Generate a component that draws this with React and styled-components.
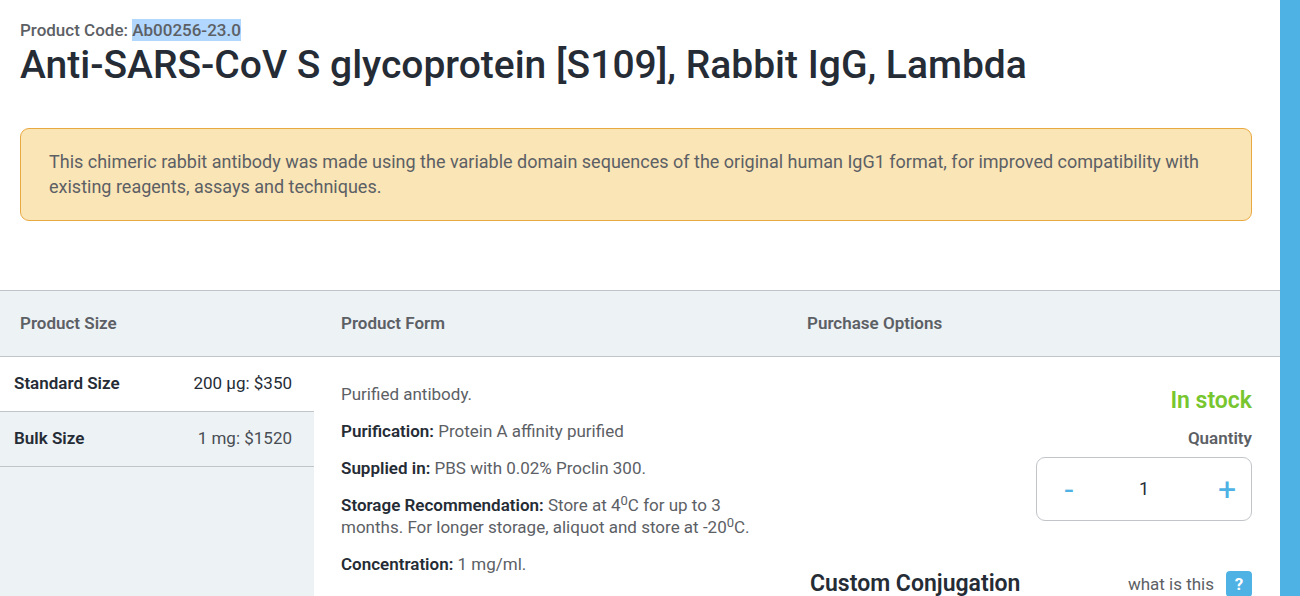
import React, { useState } from "react";
import styled, { createGlobalStyle, css } from "styled-components";

const color = {
  ink: "#252c35",
  text: "#5c6065",
  panel: "#edf2f5",
  line: "#c1c5c9",
  blue: "#4fb2e5",
  green: "#78c62f",
};

const GlobalStyle = createGlobalStyle`
  *, *::before, *::after { box-sizing: border-box; }
  body {
    margin: 0;
    background: #fff;
    color: ${color.text};
    font-family: Roboto, "Liberation Sans", sans-serif;
    font-size: 17px;
    line-height: 22px;
  }
  button, input { font: inherit; color: inherit; }
  h1, h2, p { margin: 0; }
`;

const Page = styled.main`
  display: flex;
  flex-direction: column;
  min-height: 100vh;
  border-right: 20px solid ${color.blue};
`;

const Intro = styled.header`
  padding: 19px 28px 69px 20px;
`;

const ProductCode = styled.p`
  font-weight: 500;

  mark {
    padding: 1px 0;
    background: #b2d7fe;
    color: inherit;
  }
`;

const Title = styled.h1`
  color: ${color.ink};
  font-size: 39px;
  font-weight: 500;
  line-height: 48px;
`;

const Notice = styled.p`
  margin-top: 39px;
  padding: 20px 28px 21px;
  border: 1px solid #e9a941;
  border-radius: 9px;
  background: #fae5b6;
  font-size: 18px;
  line-height: 25px;
`;

const columns = css`
  display: grid;
  grid-template-columns: 314fr 466fr 500fr;
`;

const ColumnHeader = styled.div`
  ${columns}
  border: solid ${color.line};
  border-width: 1px 0;
  background: ${color.panel};
`;

const ColumnTitle = styled.h2`
  padding: 21px 0 22px ${(p) => (p.$first ? "20px" : "27px")};
  font-size: 17px;
  font-weight: 600;
  line-height: 22px;
`;

const ColumnBody = styled.div`
  ${columns}
  flex: 1;
`;

const SizeList = styled.div`
  background: ${color.panel};
`;

const SizeOption = styled.button`
  display: flex;
  justify-content: space-between;
  width: 100%;
  padding: 15px 22px 17px 14px;
  border: 0;
  border-bottom: 1px solid ${color.line};
  background: ${(p) => (p.$selected ? "#fff" : "transparent")};
  color: ${(p) => (p.$selected ? color.ink : "#484d53")};
  cursor: pointer;
`;

const Strong = styled.strong`
  color: ${color.ink};
  font-weight: 600;
`;

const Details = styled.div`
  display: flex;
  flex-direction: column;
  gap: 15px;
  padding: 26px 26px 22px 27px;

  sup {
    font-size: 13px;
    line-height: 12px;
    vertical-align: 6px;
  }
`;

const Purchase = styled.div`
  display: flex;
  flex-direction: column;
  align-items: flex-end;
  padding: 30px 28px 0;
`;

const Stock = styled.p`
  color: ${color.green};
  font-size: 23px;
  font-weight: 600;
  line-height: 28px;
`;

const QuantityLabel = styled.label`
  margin: 12px 0 8px;
  font-weight: 600;
`;

const Stepper = styled.div`
  display: flex;
  align-items: center;
  justify-content: space-between;
  width: 216px;
  height: 64px;
  padding: 0 10px 0 18px;
  border: 1px solid ${color.line};
  border-radius: 9px;
`;

const StepButton = styled.button`
  width: 28px;
  height: 40px;
  padding: 0;
  border: 0;
  background: none;
  color: ${color.blue};
  font-size: 32px;
  line-height: 38px;
  cursor: pointer;
`;

const QuantityInput = styled.input`
  width: 80px;
  margin-right: 8px;
  padding: 0;
  border: 0;
  background: none;
  color: ${color.ink};
  font-size: 18px;
  text-align: center;
`;

const Conjugation = styled.div`
  display: flex;
  align-items: center;
  width: 100%;
  margin-top: 50px;
`;

const ConjugationTitle = styled.h2`
  flex: 1;
  padding-left: 2px;
  color: ${color.ink};
  font-size: 23px;
  font-weight: 600;
  line-height: 26px;
`;

const HelpButton = styled.button`
  width: 26px;
  height: 26px;
  margin-left: 12px;
  padding: 0;
  border: 0;
  border-radius: 4px;
  background: ${color.blue};
  color: #fff;
  font-weight: 700;
  cursor: pointer;
`;

const sizes = [
  { name: "Standard Size", price: "200 µg: $350" },
  { name: "Bulk Size", price: "1 mg: $1520" },
];

export default function App() {
  const [selected, setSelected] = useState(0);
  const [quantity, setQuantity] = useState(1);

  return (
    <>
      <GlobalStyle />
      <Page>
        <Intro>
          <ProductCode>
            Product Code: <mark>Ab00256-23.0</mark>
          </ProductCode>
          <Title>Anti-SARS-CoV S glycoprotein [S109], Rabbit IgG, Lambda</Title>
          <Notice>
            This chimeric rabbit antibody was made using the variable domain
            sequences of the original human IgG1 format, for improved
            compatibility with existing reagents, assays and techniques.
          </Notice>
        </Intro>
        <ColumnHeader>
          <ColumnTitle $first>Product Size</ColumnTitle>
          <ColumnTitle>Product Form</ColumnTitle>
          <ColumnTitle>Purchase Options</ColumnTitle>
        </ColumnHeader>
        <ColumnBody>
          <SizeList>
            {sizes.map((size, i) => (
              <SizeOption
                key={size.name}
                type="button"
                $selected={i === selected}
                aria-pressed={i === selected}
                onClick={() => setSelected(i)}
              >
                <Strong>{size.name}</Strong>
                <span>{size.price}</span>
              </SizeOption>
            ))}
          </SizeList>
          <Details>
            <p>Purified antibody.</p>
            <p>
              <Strong>Purification:</Strong> Protein A affinity purified
            </p>
            <p>
              <Strong>Supplied in:</Strong> PBS with 0.02% Proclin 300.
            </p>
            <p>
              <Strong>Storage Recommendation:</Strong> Store at 4<sup>0</sup>C
              for up to 3 months. For longer storage, aliquot and store at -20
              <sup>0</sup>C.
            </p>
            <p>
              <Strong>Concentration:</Strong> 1 mg/ml.
            </p>
          </Details>
          <Purchase>
            <Stock>In stock</Stock>
            <QuantityLabel htmlFor="quantity">Quantity</QuantityLabel>
            <Stepper>
              <StepButton
                type="button"
                aria-label="Decrease quantity"
                onClick={() => setQuantity(Math.max(1, quantity - 1))}
              >
                -
              </StepButton>
              <QuantityInput
                id="quantity"
                inputMode="numeric"
                value={quantity}
                onChange={(e) => setQuantity(Number(e.target.value) || 1)}
              />
              <StepButton
                type="button"
                aria-label="Increase quantity"
                onClick={() => setQuantity(quantity + 1)}
              >
                +
              </StepButton>
            </Stepper>
            <Conjugation>
              <ConjugationTitle>Custom Conjugation</ConjugationTitle>
              <span>what is this</span>
              <HelpButton type="button" aria-label="What is custom conjugation">
                ?
              </HelpButton>
            </Conjugation>
          </Purchase>
        </ColumnBody>
      </Page>
    </>
  );
}
